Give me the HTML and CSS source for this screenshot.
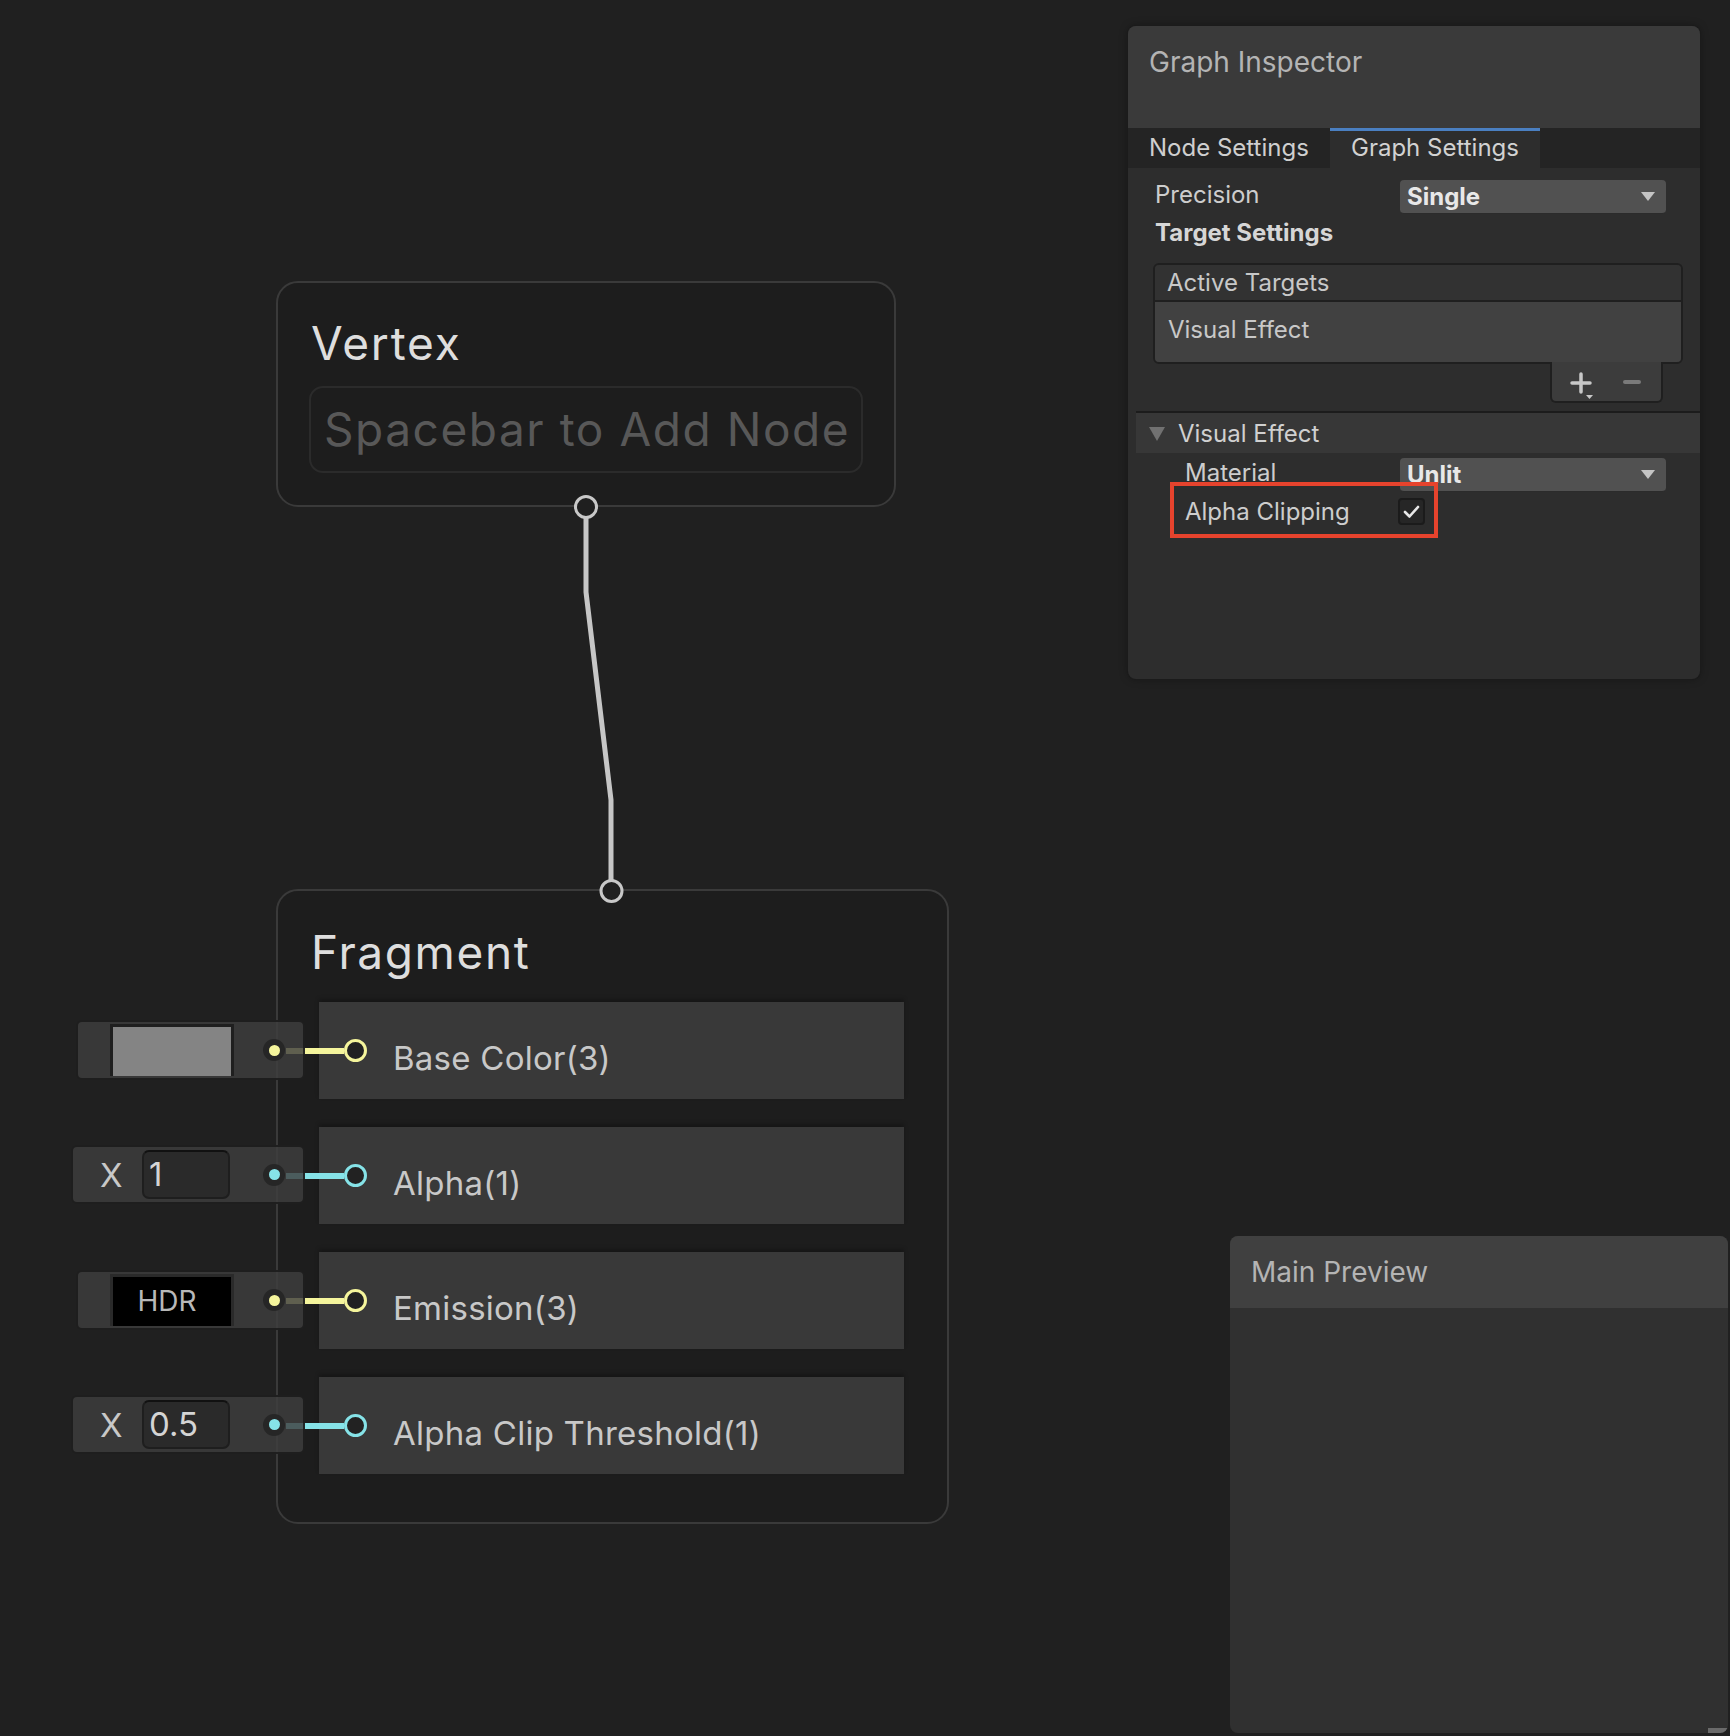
FILE: index.html
```html
<!DOCTYPE html>
<html lang="en">
<head>
<meta charset="utf-8">
<title>Shader Graph</title>
<link rel="stylesheet" href="styles.css">
</head>
<body>
<div class="canvas">
  <section class="node vertex">
    <h2 class="node-title">Vertex</h2>
    <div class="add-field">Spacebar to Add Node</div>
  </section>

  <section class="node fragment">
    <h2 class="node-title">Fragment</h2>
    <div class="ports">
      <div class="port-row vec3">
        <span class="wire"></span>
        <div class="input-box color-box">
          <span class="swatch gray"></span>
          <span class="dot"></span>
        </div>
        <span class="port-circle"></span>
        <span class="port-label">Base Color(3)</span>
      </div>
      <div class="port-row vec1">
        <span class="wire"></span>
        <div class="input-box float-box">
          <span class="axis">X</span>
          <span class="num-field">1</span>
          <span class="dot"></span>
        </div>
        <span class="port-circle"></span>
        <span class="port-label">Alpha(1)</span>
      </div>
      <div class="port-row vec3">
        <span class="wire"></span>
        <div class="input-box color-box">
          <span class="swatch hdr">HDR</span>
          <span class="dot"></span>
        </div>
        <span class="port-circle"></span>
        <span class="port-label">Emission(3)</span>
      </div>
      <div class="port-row vec1">
        <span class="wire"></span>
        <div class="input-box float-box">
          <span class="axis">X</span>
          <span class="num-field">0.5</span>
          <span class="dot"></span>
        </div>
        <span class="port-circle"></span>
        <span class="port-label">Alpha Clip Threshold(1)</span>
      </div>
    </div>
  </section>

  <svg class="edges" width="1730" height="1736" viewBox="0 0 1730 1736">
    <path d="M586 517 L586 592 L611 800 L611 881" fill="none" stroke="#c6c6c6" stroke-width="5"/>
    <circle cx="586" cy="507" r="10.5" fill="#1f1f1f" stroke="#c8c8c8" stroke-width="3"/>
    <circle cx="611.5" cy="891" r="10.5" fill="#1f1f1f" stroke="#c8c8c8" stroke-width="3"/>
  </svg>

  <aside class="inspector">
    <header class="panel-header"><h3 class="panel-title">Graph Inspector</h3></header>
    <nav class="tabs">
      <span class="tab">Node Settings</span>
      <span class="tab active">Graph Settings</span>
    </nav>
    <div class="inspector-body">
      <div class="field-row">
        <span class="field-label">Precision</span>
        <div class="dropdown"><span>Single</span><i class="caret"></i></div>
      </div>
      <div class="section-title">Target Settings</div>
      <div class="target-list">
        <div class="list-header">Active Targets</div>
        <div class="list-item">Visual Effect</div>
      </div>
      <div class="list-footer">
        <div class="list-buttons">
          <svg class="btn-plus" width="28" height="28" viewBox="0 0 28 28">
            <path d="M4 12 H22 M13 3 V21" stroke="#c8c8c8" stroke-width="3.5" stroke-linecap="round"/>
            <path d="M18 24 H25 L21.5 28 Z" fill="#c8c8c8"/>
          </svg>
          <svg class="btn-minus" width="18" height="6" viewBox="0 0 18 6">
            <path d="M2 3 H16" stroke="#7a7a7a" stroke-width="4" stroke-linecap="round"/>
          </svg>
        </div>
      </div>
      <div class="foldout">
        <i class="fold-arrow"></i>
        <span>Visual Effect</span>
      </div>
      <div class="sub-fields">
        <div class="field-row sub">
          <span class="field-label">Material</span>
          <div class="dropdown"><span>Unlit</span><i class="caret"></i></div>
        </div>
        <div class="field-row sub check-row">
          <span class="field-label">Alpha Clipping</span>
          <span class="checkbox">
            <svg width="23" height="23" viewBox="0 0 23 23"><path d="M5 12 L9.5 16.5 L18 7" fill="none" stroke="#e8e8e8" stroke-width="2.6" stroke-linecap="round" stroke-linejoin="round"/></svg>
          </span>
        </div>
      </div>
    </div>
    <div class="highlight"></div>
  </aside>

  <aside class="preview">
    <header class="preview-header"><h3 class="panel-title">Main Preview</h3></header>
    <div class="preview-body"></div>
    <span class="resize-grip"></span>
  </aside>
</div>
</body>
</html>
```

FILE: styles.css
```css
* { box-sizing: border-box; }

html, body {
  margin: 0;
  padding: 0;
  background: #202020;
}

body {
  font-family: Inter, "Noto Sans", sans-serif;
  color: #d2d2d2;
}

.canvas {
  position: relative;
  width: 1730px;
  height: 1736px;
  overflow: hidden;
  background: #202020;
}

/* ---------- graph nodes ---------- */
.node {
  position: absolute;
  background: #1d1d1d;
  border: 2px solid #3a3a3a;
  border-radius: 22px;
  display: flex;
  flex-direction: column;
}

.vertex {
  left: 276px;
  top: 281px;
  width: 620px;
  height: 226px;
  padding: 33px 31px 0 31px;
}

.fragment {
  left: 276px;
  top: 889px;
  width: 673px;
  height: 635px;
  padding: 34px 43px 0 41px;
}

.node-title {
  margin: 0;
  padding-left: 2px;
  font-size: 46px;
  font-weight: 400;
  line-height: 55px;
  letter-spacing: 1.8px;
  color: #dedede;
}

.fragment .node-title { padding-left: 0; margin-left: -8px; letter-spacing: 1.6px; }

.add-field {
  margin-top: 15px;
  height: 87px;
  border: 2px solid #2b2b2b;
  border-radius: 14px;
  padding-left: 13px;
  display: flex;
  align-items: center;
  font-size: 46px;
  line-height: 55px;
  letter-spacing: 1.55px;
  color: #585858;
  white-space: nowrap;
}

.ports {
  margin-top: 22px;
  display: flex;
  flex-direction: column;
  gap: 28px;
}

.port-row {
  position: relative;
  height: 97px;
  background: #393939;
  box-shadow: 0 -3px 4px rgba(0, 0, 0, 0.25);
  display: flex;
  align-items: center;
  --port: #f5f59c;
}

.port-row.vec1 { --port: #86e3e8; }

.wire {
  position: absolute;
  left: -33px;
  width: 58px;
  top: calc(50% - 3px);
  height: 6px;
  background: var(--port);
}

.port-circle {
  position: relative;
  margin-left: 25px;
  width: 23px;
  height: 23px;
  border: 3px solid var(--port);
  border-radius: 50%;
  background: #222222;
  flex: none;
}

.port-label {
  margin-left: 26px;
  padding-top: 14px;
  font-size: 33px;
  line-height: 40px;
  letter-spacing: 0.25px;
  color: #c8c8c8;
  white-space: nowrap;
}

.input-box {
  position: absolute;
  top: 18px;
  height: 60px;
  border: 2px solid rgba(24, 24, 24, 0.8);
  border-radius: 6px;
  background: rgba(62, 62, 62, 0.82);
  display: flex;
  align-items: center;
  padding-right: 18px;
}

.color-box {
  left: -243px;
  width: 229px;
  padding-left: 32px;
}

.float-box {
  left: -248px;
  width: 234px;
  height: 59px;
  padding-left: 27px;
}

.swatch {
  width: 124px;
  height: 52px;
  flex: none;
}

.swatch.gray {
  background: #848484;
  border: 3px solid #1f1f1f;
  border-bottom: 0;
}

.swatch.hdr {
  background: #000000;
  border: 3px solid #2a2a2a;
  border-bottom: 0;
  color: #b8b8b8;
  font-size: 28px;
  line-height: 49px;
  text-align: center;
  padding-right: 10px;
}

.axis {
  font-size: 33px;
  line-height: 40px;
  color: #c8c8c8;
  width: 21px;
}

.num-field {
  margin-left: 21px;
  width: 88px;
  height: 49px;
  background: #2a2a2a;
  border: 2px solid #1e1e1e;
  border-top-color: #111111;
  border-radius: 7px;
  padding-left: 5px;
  font-size: 33px;
  line-height: 44px;
  color: #d4d4d4;
}

.dot {
  margin-left: auto;
  width: 22px;
  height: 22px;
  border-radius: 50%;
  background: #262626;
  display: flex;
  align-items: center;
  justify-content: center;
  flex: none;
}

.dot::after {
  content: "";
  width: 11px;
  height: 11px;
  border-radius: 50%;
  background: var(--port);
}

.edges {
  position: absolute;
  left: 0;
  top: 0;
  pointer-events: none;
}

/* ---------- Graph Inspector ---------- */
.inspector {
  position: absolute;
  left: 1128px;
  top: 26px;
  width: 572px;
  height: 653px;
  background: #2d2d2d;
  border-radius: 8px;
  overflow: hidden;
  box-shadow: 0 0 0 1px #1b1b1b, 0 0 8px rgba(0, 0, 0, 0.35);
}

.panel-header {
  height: 102px;
  background: #3a3a3a;
  padding: 19px 0 0 21px;
}

.panel-title {
  margin: 0;
  font-size: 28px;
  font-weight: 400;
  line-height: 34px;
  color: #b4b4b4;
}

.tabs {
  display: flex;
  height: 40px;
  background: #242424;
}

.tab {
  padding: 5px 21px 0 21px;
  font-size: 24px;
  line-height: 29px;
  color: #cfcfcf;
  white-space: nowrap;
}

.tab:first-child { width: 202px; }

.tab.active {
  width: 210px;
  background: #2d2d2d;
  border-top: 3px solid #4a7fc1;
  padding-top: 2px;
  color: #d2d2d2;
}

.inspector-body {
  padding: 12px 34px 0 27px;
  display: flex;
  flex-direction: column;
}

.field-row {
  display: flex;
  align-items: center;
  height: 34px;
}

.field-label {
  width: 245px;
  font-size: 24px;
  line-height: 29px;
  padding-bottom: 5px;
  color: #cdcdcd;
  flex: none;
  white-space: nowrap;
}

.dropdown {
  flex: 1;
  height: 34px;
  background: #515151;
  border-radius: 4px;
  border-bottom: 1px solid #2b2b2b;
  display: flex;
  align-items: center;
  justify-content: space-between;
  padding: 0 11px 0 7px;
  font-size: 24px;
  font-weight: 700;
  color: #e8e8e8;
}

.caret {
  width: 0;
  height: 0;
  border-left: 7px solid transparent;
  border-right: 7px solid transparent;
  border-top: 9px solid #c4c4c4;
}

.section-title {
  margin-top: 4px;
  font-size: 24px;
  line-height: 29px;
  font-weight: 700;
  color: #d6d6d6;
}

.target-list {
  margin: 16px -17px 0 -2px;
  border: 2px solid #1f1f1f;
  border-radius: 6px;
  overflow: hidden;
}

.list-header {
  height: 37px;
  background: #323232;
  border-bottom: 2px solid #1f1f1f;
  padding: 3px 0 0 12px;
  font-size: 24px;
  line-height: 29px;
  color: #c8c8c8;
}

.list-item {
  height: 60px;
  background: #414141;
  padding: 13px 0 0 13px;
  font-size: 24px;
  line-height: 29px;
  color: #c8c8c8;
}

.list-footer {
  margin: 0 -17px 0 -2px;
  display: flex;
  justify-content: flex-end;
  padding-right: 20px;
}

.list-buttons {
  margin-top: -2px;
  width: 113px;
  height: 41px;
  background: #3c3c3c;
  border: 2px solid #1f1f1f;
  border-top: 0;
  border-radius: 0 0 6px 6px;
  display: flex;
  align-items: center;
  padding: 4px 0 0 16px;
}

.btn-plus { margin-top: 2px; }
.btn-minus { margin-left: 27px; margin-top: -4px; }

.foldout {
  margin: 8px -34px 0 -19px;
  height: 42px;
  border-top: 2px solid #1c1c1c;
  background: #373737;
  display: flex;
  align-items: center;
  padding: 0 0 0 13px;
  font-size: 24px;
  line-height: 29px;
  color: #d0d0d0;
}

.fold-arrow {
  width: 0;
  height: 0;
  border-left: 8.5px solid transparent;
  border-right: 8.5px solid transparent;
  border-top: 14px solid #717171;
  margin-right: 13px;
  margin-top: 1px;
}

.sub-fields {
  display: flex;
  flex-direction: column;
}

.field-row.sub { margin-top: 5px; padding-left: 30px; }
.field-row.sub .field-label { width: 215px; }

.check-row {
  margin-top: 6px !important;
  height: 27px !important;
}

.check-row .field-label { padding-bottom: 0; width: 213px !important; }

.checkbox {
  width: 27px;
  height: 27px;
  background: #262626;
  border: 2px solid #1b1b1b;
  border-radius: 4px;
  display: flex;
  align-items: center;
  justify-content: center;
}

.highlight {
  position: absolute;
  left: 42px;
  top: 456px;
  width: 268px;
  height: 56px;
  border: 4px solid #e6432d;
}

/* ---------- Main Preview ---------- */
.preview {
  position: absolute;
  left: 1230px;
  top: 1236px;
  width: 498px;
  height: 497px;
  background: #303030;
  border-radius: 8px;
  overflow: hidden;
  display: flex;
  flex-direction: column;
}

.preview-header {
  height: 72px;
  background: #404040;
  padding: 19px 0 0 21px;
  flex: none;
}

.preview-body { flex: 1; }

.resize-grip {
  position: absolute;
  right: 0;
  bottom: 0;
  width: 20px;
  height: 5px;
  background: #6a6a6a;
}
```
